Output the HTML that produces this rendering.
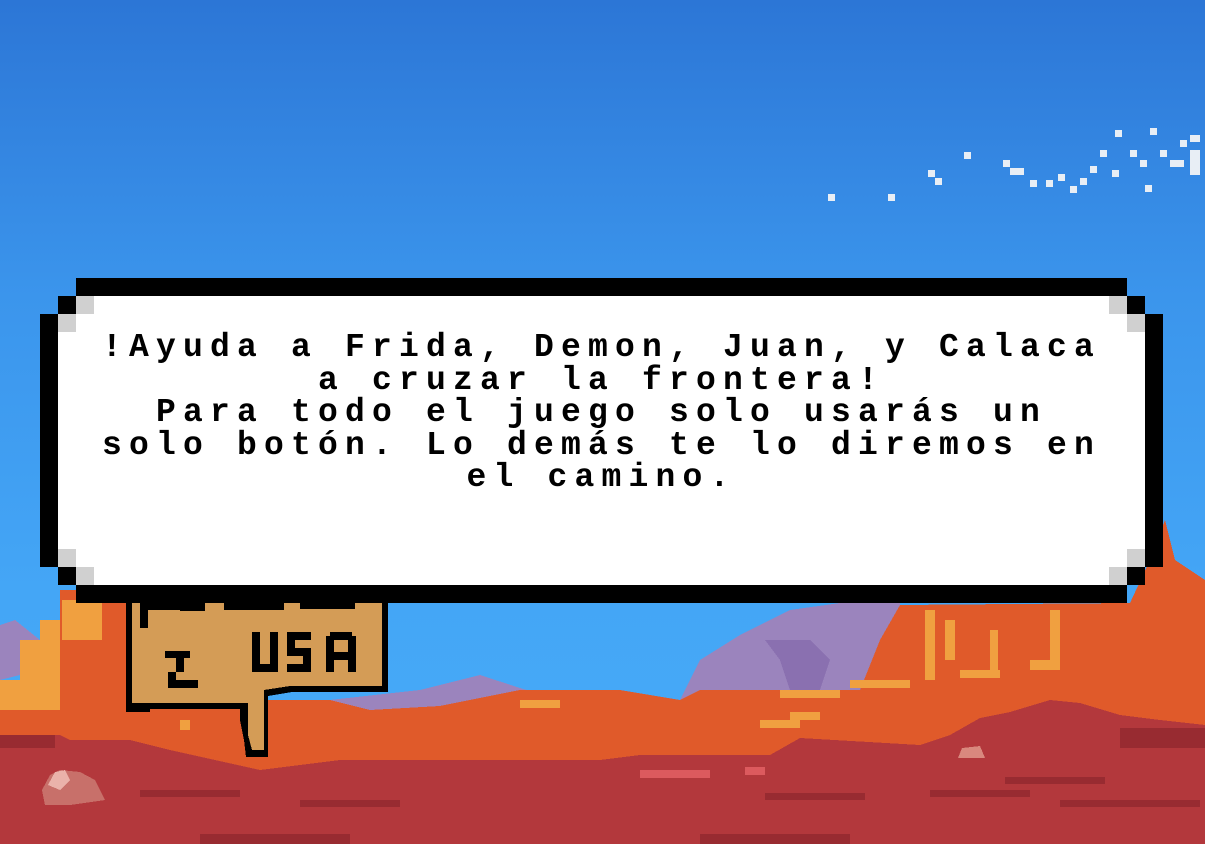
<!DOCTYPE html>
<html><head><meta charset="utf-8"><style>
html,body{margin:0;padding:0;width:1205px;height:844px;overflow:hidden}
body{position:relative;background:linear-gradient(180deg,#2c76d6 0%,#3b95ec 35%,#44a6f6 70%,#47abf8 100%)}
svg{position:absolute;left:0;top:0}
.box{position:absolute}
.txt{position:absolute;left:40px;top:332px;width:1123px;text-align:center;font-family:"Liberation Mono",monospace;font-weight:bold;font-size:33px;letter-spacing:7.2px;line-height:32.5px;color:#000;white-space:nowrap}
</style></head><body>
<svg width="1205" height="844" viewBox="0 0 1205 844" shape-rendering="crispEdges">
<g fill="#e8eef5">
<rect x="828" y="194" width="7" height="7"/><rect x="888" y="194" width="7" height="7"/><rect x="928" y="170" width="7" height="7"/><rect x="935" y="178" width="7" height="7"/><rect x="964" y="152" width="7" height="7"/>
<rect x="1003" y="160" width="7" height="7"/><rect x="1010" y="168" width="14" height="7"/><rect x="1030" y="180" width="7" height="7"/><rect x="1046" y="180" width="7" height="7"/><rect x="1058" y="174" width="7" height="7"/>
<rect x="1070" y="186" width="7" height="7"/><rect x="1080" y="178" width="7" height="7"/><rect x="1090" y="166" width="7" height="7"/><rect x="1100" y="150" width="7" height="7"/><rect x="1115" y="130" width="7" height="7"/><rect x="1112" y="170" width="7" height="7"/>
<rect x="1130" y="150" width="7" height="7"/><rect x="1140" y="160" width="7" height="7"/><rect x="1150" y="128" width="7" height="7"/><rect x="1160" y="150" width="7" height="7"/><rect x="1170" y="160" width="14" height="7"/><rect x="1180" y="140" width="7" height="7"/><rect x="1190" y="150" width="10" height="25"/><rect x="1145" y="185" width="7" height="7"/><rect x="1190" y="135" width="10" height="7"/>
</g>
<polygon fill="#9b84bd" points="0,625 15,620 40,640 40,670 0,680"/>
<polygon fill="#9b84bd" points="330,700 420,690 480,675 520,688 560,700 600,712 680,700 700,660 740,635 790,610 840,603 900,603 900,700 700,740 330,740"/>
<polygon fill="#8a70b0" points="765,640 810,640 830,660 820,690 790,690 780,660"/>
<polygon fill="#e05a2a" points="0,690 40,680 60,640 60,590 130,590 130,700 330,700 370,710 440,706 520,690 620,690 680,700 700,690 860,690 880,640 900,605 1130,603 1150,560 1165,520 1175,560 1205,580 1205,844 0,844"/>
<g fill="#f0a040">
<rect x="0" y="680" width="60" height="30"/><rect x="20" y="640" width="40" height="40"/><rect x="62" y="600" width="40" height="40"/><rect x="40" y="620" width="20" height="20"/>
<rect x="925" y="610" width="10" height="70"/><rect x="945" y="620" width="10" height="40"/><rect x="990" y="630" width="8" height="40"/><rect x="1050" y="610" width="10" height="60"/><rect x="1030" y="660" width="30" height="10"/>
<rect x="850" y="680" width="60" height="8"/><rect x="780" y="690" width="60" height="8"/><rect x="760" y="720" width="40" height="8"/><rect x="790" y="712" width="30" height="8"/><rect x="960" y="670" width="40" height="8"/><rect x="1050" y="720" width="40" height="8"/>
<rect x="520" y="700" width="40" height="8"/><rect x="180" y="720" width="10" height="10"/>
</g>
<polygon fill="#b3383c" points="0,735 60,735 70,740 130,740 170,750 260,770 340,760 600,760 640,755 770,755 800,738 920,745 950,735 980,718 1010,712 1050,700 1080,703 1120,715 1160,720 1205,725 1205,844 0,844"/>
<g fill="#982b31">
<rect x="0" y="735" width="55" height="13"/><rect x="140" y="790" width="100" height="7"/><rect x="300" y="800" width="100" height="7"/><rect x="765" y="793" width="100" height="7"/><rect x="930" y="790" width="100" height="7"/><rect x="1005" y="777" width="100" height="7"/><rect x="1060" y="800" width="140" height="7"/><rect x="1120" y="728" width="85" height="20"/><rect x="700" y="834" width="150" height="10"/><rect x="200" y="834" width="150" height="10"/>
</g>
<g fill="#dc5a5e"><rect x="640" y="770" width="70" height="8"/><rect x="745" y="767" width="20" height="8"/></g>
<polygon fill="#c8706a" points="42,790 50,775 60,770 80,772 95,780 105,800 70,805 45,805"/>
<polygon fill="#eab2aa" points="48,785 55,772 65,770 70,780 60,790"/>
<polygon fill="#d9887e" points="958,758 962,748 980,746 985,758"/>
<polygon fill="#000" points="126,600 388,600 388,692 292,692 268,696 268,757 246,757 244,740 240,720 240,709 150,709 150,712 126,712"/>
<polygon fill="#d49c56" points="132,603 382,603 382,686 290,686 264,690 264,750 252,750 248,735 248,703 150,703 132,703"/>
<g fill="#000">
<rect x="252" y="632" width="8" height="40"/><rect x="252" y="664" width="24" height="8"/><rect x="270" y="632" width="8" height="40"/>
<rect x="287" y="632" width="24" height="8"/><rect x="287" y="632" width="8" height="20"/><rect x="287" y="648" width="24" height="8"/><rect x="303" y="648" width="8" height="24"/><rect x="287" y="664" width="24" height="8"/>
<rect x="330" y="632" width="22" height="8"/><rect x="326" y="636" width="8" height="36"/><rect x="348" y="636" width="8" height="36"/><rect x="326" y="652" width="30" height="8"/>
<rect x="165" y="651" width="25" height="7"/><rect x="176" y="658" width="8" height="14"/><rect x="168" y="672" width="8" height="8"/><rect x="168" y="680" width="30" height="8"/>
<rect x="140" y="603" width="40" height="7"/><rect x="140" y="603" width="8" height="25"/><rect x="180" y="603" width="25" height="8"/><rect x="224" y="603" width="60" height="7"/><rect x="300" y="603" width="55" height="6"/>
</g>
</svg>
<div class="box" style="left:76px;top:278px;width:1051px;height:325px;background:#000"></div>
<div class="box" style="left:58px;top:296px;width:1087px;height:289px;background:#000"></div>
<div class="box" style="left:40px;top:314px;width:1123px;height:253px;background:#000"></div>
<div class="box" style="left:76px;top:296px;width:1051px;height:289px;background:#fff"></div>
<div class="box" style="left:58px;top:314px;width:1087px;height:253px;background:#fff"></div>
<div class="box" style="left:76px;top:296px;width:18px;height:18px;background:#d0d0d0"></div>
<div class="box" style="left:58px;top:314px;width:18px;height:18px;background:#d0d0d0"></div>
<div class="box" style="left:1109px;top:296px;width:18px;height:18px;background:#d0d0d0"></div>
<div class="box" style="left:1127px;top:314px;width:18px;height:18px;background:#d0d0d0"></div>
<div class="box" style="left:58px;top:549px;width:18px;height:18px;background:#d0d0d0"></div>
<div class="box" style="left:76px;top:567px;width:18px;height:18px;background:#d0d0d0"></div>
<div class="box" style="left:1127px;top:549px;width:18px;height:18px;background:#d0d0d0"></div>
<div class="box" style="left:1109px;top:567px;width:18px;height:18px;background:#d0d0d0"></div>
<div class="txt">!Ayuda a Frida, Demon, Juan, y Calaca<br>a cruzar la frontera!<br>Para todo el juego solo usarás un<br>solo botón. Lo demás te lo diremos en<br>el camino.</div>
</body></html>
